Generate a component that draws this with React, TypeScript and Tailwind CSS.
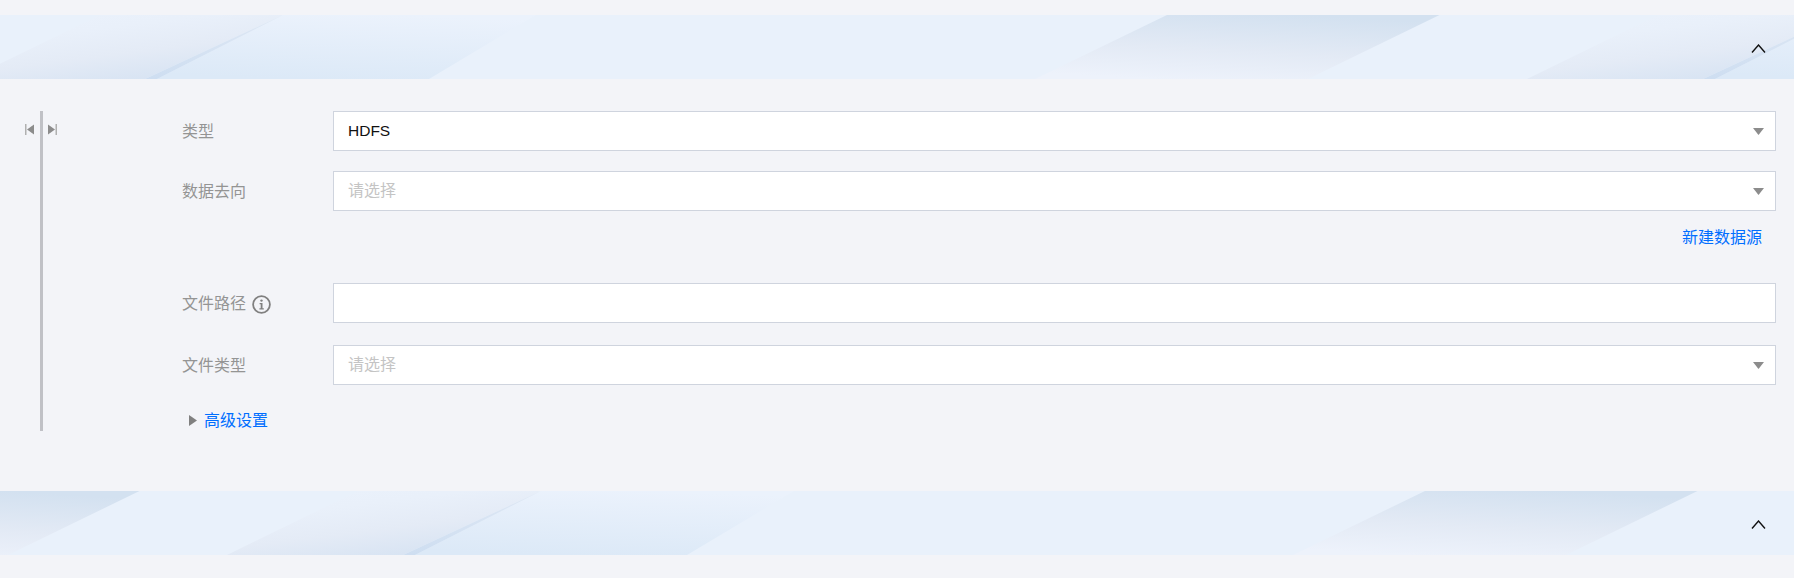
import React from "react";

function Pattern({ dx }: { dx: number }) {
  return (
    <g transform={`translate(${dx} 0)`}>
      <polygon points="100,0 283,0 145,64 -31,64" fill="url(#ga)" />
      <polygon points="283,0 536,0 429,64 157,64" fill="url(#gb)" />
      <polygon points="283,0 157,64 145,64" fill="url(#gl)" />
      <polygon points="1167,0 1439.5,0 1308,64 1035,64" fill="url(#gc)" />
    </g>
  );
}

function Band({ offsets, id }: { offsets: number[]; id: string }) {
  return (
    <div className="relative h-16 bg-[#e9f1fb]">
      <svg width="1794" height="64" viewBox="0 0 1794 64" className="block">
        <defs>
          <linearGradient id="ga" x1="0.2" y1="0.1" x2="0.75" y2="1">
            <stop offset="0" stopColor="#eaf1fb" />
            <stop offset="0.2" stopColor="#e9f0fa" />
            <stop offset="0.55" stopColor="#e4ebf6" />
            <stop offset="1" stopColor="#d5e2f2" />
          </linearGradient>
          <linearGradient id="gb" x1="0.6" y1="0" x2="0.4" y2="1">
            <stop offset="0" stopColor="#ebf2fc" />
            <stop offset="1" stopColor="#dce9f7" />
          </linearGradient>
          <linearGradient id="gl" x1="0" y1="0" x2="0" y2="1">
            <stop offset="0" stopColor="#dfe8f4" />
            <stop offset="1" stopColor="#cedef1" />
          </linearGradient>
          <linearGradient id="gc" x1="0.3" y1="1" x2="0.65" y2="0">
            <stop offset="0" stopColor="#edf2fb" />
            <stop offset="0.45" stopColor="#e3eaf5" />
            <stop offset="1" stopColor="#d3e1f0" />
          </linearGradient>
        </defs>
        {offsets.map((o) => (
          <Pattern key={id + o} dx={o} />
        ))}
      </svg>
      <button className="absolute right-[28px] top-[29px] block h-[9px] w-[15px]">
        <svg width="15" height="9" viewBox="0 0 15 9" className="block">
          <polyline points="1,8.5 7.5,1 14,8.5" fill="none" stroke="#111111" strokeWidth="1.4" />
        </svg>
      </button>
    </div>
  );
}

function Arrow() {
  return (
    <svg width="11" height="7" viewBox="0 0 11 7" className="block shrink-0">
      <polygon points="0,0 11,0 5.5,7" fill="#8c8c8c" />
    </svg>
  );
}

function Field({ value, placeholder, arrow = true }: { value?: string; placeholder?: string; arrow?: boolean }) {
  return (
    <div className="flex h-10 flex-1 items-center justify-between border border-[#cfd4de] bg-white pl-[14px] pr-[11px]">
      {value ? (
        <span className="text-[15.5px] text-[#111111]">{value}</span>
      ) : (
        <span className="text-[16px] text-[#c4c4c4]">{placeholder}</span>
      )}
      {arrow && <Arrow />}
    </div>
  );
}

function Row({ label, children, icon }: { label: string; children: React.ReactNode; icon?: React.ReactNode }) {
  return (
    <div className="flex h-10 items-center">
      <div className="flex w-[150px] shrink-0 items-center gap-[5px] pt-[2px] text-[16px] text-[#949494]">
        <span className="-ml-px">{label}</span>
        {icon}
      </div>
      {children}
    </div>
  );
}

export default function App() {
  return (
    <div className="flex min-h-[578px] w-[1794px] flex-col bg-[#f3f4f8] pt-[15px] font-['Liberation_Sans','Noto_Sans_CJK_SC',sans-serif]">
      <Band id="a" offsets={[0, 1558]} />
      <div className="flex h-[412px] pl-[25px] pr-[18px] pt-[32px]">
        <div className="flex h-[320px] w-[158px] shrink-0 items-start">
          <svg width="9" height="11" viewBox="0 0 9 11" className="mt-[13px] block">
            <rect x="0" y="0" width="1.5" height="11" fill="#b0b0b0" />
            <polygon points="9,0.5 9,10.5 2,5.5" fill="#8c8c8c" />
          </svg>
          <div className="ml-[6px] h-full w-[3px] bg-[#c0c1c6]" />
          <svg width="9" height="11" viewBox="0 0 9 11" className="ml-[5px] mt-[13px] block">
            <polygon points="0,0.5 0,10.5 7,5.5" fill="#8c8c8c" />
            <rect x="7.5" y="0" width="1.5" height="11" fill="#b0b0b0" />
          </svg>
        </div>
        <div className="flex flex-1 flex-col">
          <Row label="类型">
            <Field value="HDFS" />
          </Row>
          <div className="mt-5">
            <Row label="数据去向">
              <Field placeholder="请选择" />
            </Row>
          </div>
          <div className="mt-[15px] flex h-6 justify-end pr-[14px] text-[16px] leading-6 text-[#006eff]">
            <a>新建数据源</a>
          </div>
          <div className="mt-[33px]">
            <Row
              label="文件路径"
              icon={
                <svg width="19" height="19" viewBox="0 0 19 19" className="ml-px block">
                  <circle cx="9.5" cy="9.5" r="8.4" fill="none" stroke="#808080" strokeWidth="1.8" />
                  <circle cx="9.5" cy="5.6" r="1.2" fill="#808080" />
                  <path d="M7.6 8h2.9v5.2h1.3v1.2H7.4v-1.2h1.3V9.2H7.6z" fill="#808080" />
                </svg>
              }
            >
              <Field arrow={false} />
            </Row>
          </div>
          <div className="mt-[22px]">
            <Row label="文件类型">
              <Field placeholder="请选择" />
            </Row>
          </div>
          <div className="mt-[24px] flex h-6 items-center pl-[6px] text-[16px] text-[#006eff]">
            <svg width="8" height="11" viewBox="0 0 8 11" className="-mt-px block">
              <polygon points="0,0 8,5.5 0,11" fill="#808080" />
            </svg>
            <a className="ml-[7px]">高级设置</a>
          </div>
        </div>
      </div>
      <Band id="b" offsets={[258, 258 - 1558]} />
    </div>
  );
}
